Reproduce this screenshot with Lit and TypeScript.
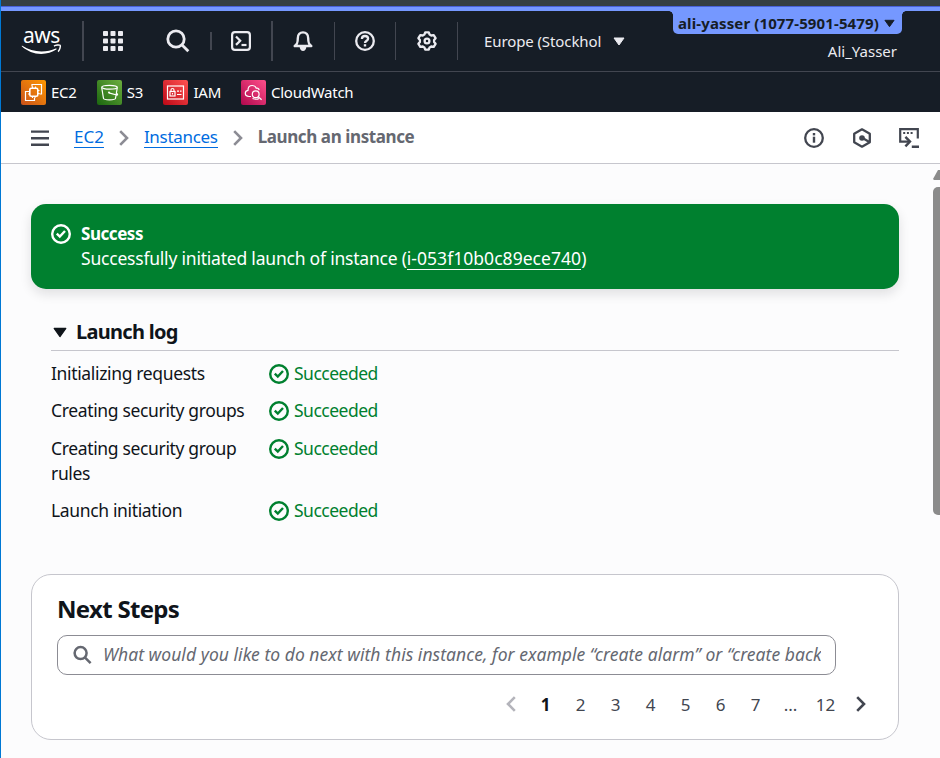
import { LitElement, html, css, svg, nothing } from "lit";
import { customElement, property } from "lit/decorators.js";

const glyphs: Record<string, { box: string; body: unknown }> = {
  apps: {
    box: "0 0 20 20",
    body: svg`<g fill="currentColor" stroke="none">${[0, 7.5, 15].map((y) =>
      [0, 7.5, 15].map((x) => svg`<rect x=${x} y=${y} width="5" height="5" rx="0.8"/>`)
    )}</g>`,
  },
  find: { box: "0 0 24 24", body: svg`<g stroke-width="2.8"><circle cx="10" cy="10" r="8.2"/><path d="M15.8 15.8 22.3 22.3"/></g>` },
  search: { box: "0 0 20 20", body: svg`<g stroke-width="2.5"><circle cx="8.6" cy="8.1" r="6"/><path d="M12.8 12.4 18.6 18.2"/></g>` },
  shell: {
    box: "0 0 20 20",
    body: svg`<g stroke-width="2.2"><rect x="1.1" y="1.1" width="17.8" height="17.8" rx="2.8"/><path d="M5 5.5 9.2 9.7 5 13.9"/><path d="M10.5 14h5"/></g>`,
  },
  bell: {
    box: "0 0 20 20",
    body: svg`<path stroke-width="2.4" stroke-linejoin="round" d="M1.7 15H18.3C15.8 13.4 15.2 12 15.2 7.2 15.2 3.5 13 1.4 10 1.4S4.8 3.5 4.8 7.2C4.8 12 4.2 13.4 1.7 15Z"/><path fill="currentColor" stroke="none" d="M6.7 16h6.6c0 2.4-1.4 3.9-3.3 3.9s-3.3-1.5-3.3-3.9Z"/>`,
  },
  help: {
    box: "0 0 20 20",
    body: svg`<g stroke-width="2.3"><circle cx="10" cy="10" r="8.8"/><path d="M6.9 7.9C6.9 6 8.2 5 10 5s3.1 1 3.1 2.7c0 2-3.1 2.1-3.1 4.4"/></g><rect x="8.8" y="13.2" width="2.4" height="2.3" fill="currentColor" stroke="none"/>`,
  },
  gear: {
    box: "0 0 20 20",
    body: svg`<path stroke-width="2.3" stroke-linejoin="round" d="M8.2 1.3h3.6l.8 2.3 1.6.9 2.5-.4 1.9 3.1-1.5 1.8v2l1.5 1.8-1.9 3.1-2.5-.4-1.6.9-.8 2.3H8.2l-.8-2.3-1.6-.9-2.5.4-1.9-3.1 1.5-1.8V9L1.4 7.2l1.9-3.1 2.5.4 1.6-.9Z"/><circle cx="10" cy="10" r="2.4" stroke-width="2.3"/>`,
  },
  caret: { box: "0 0 12 9", body: svg`<path fill="currentColor" stroke="currentColor" stroke-linejoin="round" d="M1 1h10L6 8Z"/>` },
  menu: { box: "0 0 18 16", body: svg`<path stroke-width="2.4" d="M0 1.6h18M0 8.2h18M0 14.7h18"/>` },
  next: { box: "0 0 10 16", body: svg`<path stroke-width="2.6" d="M1.2 1.2 8 8 1.2 14.8"/>` },
  prev: { box: "0 0 10 16", body: svg`<path stroke-width="2.6" d="M8.8 1.2 2 8 8.8 14.8"/>` },
  ok: { box: "0 0 20 20", body: svg`<circle cx="10" cy="10" r="8.8" stroke-width="2.4"/><path stroke-width="2.4" d="M5.8 9.6 8.8 12.6 14 7"/>` },
  info: {
    box: "0 0 20 20",
    body: svg`<circle cx="10" cy="10" r="8.8" stroke-width="2.3"/><g fill="currentColor" stroke="none"><rect x="8.8" y="5" width="2.4" height="2.4"/><rect x="8.8" y="8.7" width="2.4" height="6"/></g>`,
  },
  hex: {
    box: "0 0 20 20",
    body: svg`<path stroke-width="2.3" stroke-linejoin="round" d="M10 1.3 17.8 5.7V14.3L10 18.7 2.2 14.3V5.7Z"/><circle cx="10" cy="10" r="2.8" fill="currentColor" stroke="none"/><path stroke-width="2.3" d="M10.5 10 17.4 14"/>`,
  },
  panel: {
    box: "0 0 20 20",
    body: svg`<path stroke-width="2.2" d="M18.8 10.5V1.2H1.2V13.7H11"/><path stroke-width="2.4" d="M6.4 8.9 11 13.6 6.4 18.4M12.8 18.8H20"/><path stroke-width="2" stroke-dasharray="2 1.7" d="M4.2 5H14"/>`,
  },
  aws: { box: "0 0 40 12", body: svg`<path fill="currentColor" stroke="none" d="M.3 1.8C6 5.4 12.6 7.4 19.5 7.4c5.2 0 10-1 14.3-2.9.8-.3 1.2.6.5 1.1C30.4 8.4 25 10 19.2 10 11.8 10 5.2 7.2 0 2.6c-.5-.5-.2-1.1.3-.8Z"/><path stroke-width="1.5" d="M32 2.1c1.5-1 5.3-1.5 6.1-.8.7.8-.3 4.6-2 6.3"/>` },
  ec2: {
    box: "0 0 25 25",
    body: svg`<g stroke-width="1.2"><rect x="8.8" y="8.2" width="8" height="8" rx="1.5" stroke-width="1.6"/><path d="M11 6.5V4.5H20.5V14H18.5M7 11.5H4.5V20.5H13.5V18M11.5 8V6.5M14.5 8V6.5M17 10.5h1.5M17 13.5h1.5M8.8 11.5H7M8.8 14H7M11.5 16v2M14 16v2"/></g>`,
  },
  s3: {
    box: "0 0 25 25",
    body: svg`<g stroke-width="1.2"><ellipse cx="12.5" cy="7.2" rx="7.8" ry="1.9"/><path d="M4.7 7.5 6.5 18.5c.3 1.7 11.7 1.7 12 0L20.3 7.5M12 12.8l7.5 2.2c1.6.3 1.3-1-.2-2"/></g><circle cx="12" cy="12.6" r="1" fill="currentColor" stroke="none"/>`,
  },
  iam: {
    box: "0 0 25 25",
    body: svg`<g stroke-width="1.2"><rect x="4.5" y="6" width="16" height="13"/><rect x="7" y="11.5" width="5" height="4.5"/><path d="M8 11.5V10q0-1.5 1.5-1.5T11 10v1.5M14 11.2h2M17 11.2h1.5M14 14.5h4.5M9.5 13v1.5"/></g>`,
  },
  watch: {
    box: "0 0 25 25",
    body: svg`<g stroke-width="1.2"><path d="M10 16.5H8C5.5 16.5 4.3 15 4.3 13.3c0-1.8 1.1-2.8 2.7-3C7 7.3 9 5.5 11.3 5.5c2 0 3.3 1 4 2.8 1.6-.5 2.6.4 2.8 1.9"/><circle cx="14.7" cy="14.3" r="3.4"/><path d="m17.3 16.8 3.3 3"/><path d="M11.5 18.5q4 1.5 6.5 0"/></g>`,
  },
};

@customElement("ui-icon")
class UiIcon extends LitElement {
  @property() name = "";
  static styles = css`
    :host { display: block; flex: none; }
    svg { display: block; width: 100%; height: 100%; fill: none; stroke: currentColor; overflow: visible; }
  `;
  render() {
    const g = glyphs[this.name];
    return g ? html`<svg viewBox=${g.box} aria-hidden="true">${g.body}</svg>` : nothing;
  }
}

const favorites = [
  { icon: "ec2", label: "EC2" },
  { icon: "s3", label: "S3" },
  { icon: "iam", label: "IAM" },
  { icon: "watch", label: "CloudWatch" },
];
const log = ["Initializing requests", "Creating security groups", "Creating security group rules", "Launch initiation"];
const pages = ["1", "2", "3", "4", "5", "6", "7", "...", "12"];

@customElement("app-root")
class AppRoot extends LitElement {
  static styles = css`
    :host {
      display: block; box-sizing: border-box; width: 940px; height: 758px; overflow: hidden;
      border-left: 1px solid #0078d4; background: #fcfcfd; color: #0f141a;
      font-family: "Noto Sans", "Open Sans", sans-serif; font-size: 17px; line-height: 25px;
    }
    * { box-sizing: border-box; }
    .chrome { height: 11px; background: #7598ff; border-top: 6px solid #353f41; }
    .chrome::before { content: ""; display: block; height: 1px; background: #4862d8; }
    .top { height: 61px; display: flex; background: #161d26; border-bottom: 1px solid #424650; color: #ebebf0; }
    .cell { display: flex; align-items: center; justify-content: center; height: 60px; }
    .rule { flex: none; width: 1px; height: 38px; margin-top: 11px; background: #424650; }
    .rule.thick { width: 2px; height: 40px; margin-top: 10px; }
    .rule.short { width: 2px; height: 18px; margin-top: 21px; }
    .logo { width: 81px; flex-direction: column; align-items: flex-start; padding: 0 0 2px 21px; color: #fff; }
    .logo span { height: 20px; font-size: 21px; line-height: 20px; letter-spacing: -0.5px; padding-left: 1px; }
    .logo ui-icon { width: 40px; height: 12px; margin-top: -1px; }
    .i20 { width: 20px; height: 20px; }
    .i24 { width: 24px; height: 24px; }
    .w-apps { width: 59px; padding-right: 1px; }
    .w-find { width: 67px; padding-left: 2px; }
    .w-shell { width: 59px; padding-right: 2px; }
    .w-bell { width: 61px; padding-right: 2px; }
    .w-help { width: 60px; }
    .w-gear { width: 61px; }
    .region { padding-left: 26px; font-size: 15px; letter-spacing: -0.1px; gap: 12px; }
    .caret { width: 12px; height: 9px; }
    .user { margin-left: auto; margin-right: 38px; display: flex; flex-direction: column; align-items: flex-end; }
    .account {
      position: relative; display: flex; align-items: center; justify-content: space-between; width: 229px; height: 23px;
      padding: 1px 7px 0 5px; background: #7598ff; color: #161d26; border-radius: 0 0 5px 5px;
      font-size: 15px; font-weight: 700; white-space: nowrap; letter-spacing: 0.12px;
    }
    .account::before, .account::after { content: ""; position: absolute; top: 0; width: 4px; height: 4px; }
    .account::before { left: -4px; background: radial-gradient(circle at 0 100%, #161d26 3.5px, #7598ff 4px); }
    .account::after { right: -4px; background: radial-gradient(circle at 100% 100%, #161d26 3.5px, #7598ff 4px); }
    .account .caret { width: 11px; }
    .who { font-size: 15px; line-height: 20px; margin: 7px 5px 0 0; }
    .favs { height: 40px; display: flex; align-items: center; gap: 20px; padding-left: 20px; background: #161d26; color: #fff; font-size: 15px; letter-spacing: -0.25px; }
    .fav { display: flex; align-items: center; gap: 5px; }
    .fav:nth-child(3) { margin-left: 0.5px; }
    .tile { width: 25px; height: 25px; border-radius: 2px; }
    .tile.ec2 { background: linear-gradient(45deg, #c8511b, #ff9900); }
    .tile.s3 { background: linear-gradient(45deg, #1b660f, #6cae3e); }
    .tile.iam { background: linear-gradient(45deg, #bd0816, #ff5252); }
    .tile.watch { background: linear-gradient(45deg, #b0084d, #ff4f8b); }
    .crumbs { height: 52px; display: flex; align-items: center; background: #fff; border-bottom: 1px solid #c6c6cd; padding: 0 21px 0 30px; color: #424650; }
    .crumbs .menu { width: 18px; height: 16px; margin: 1px 25px 0 0; }
    .crumbs a { color: #006ce0; height: 23px; line-height: 23px; border-bottom: 1px solid #006ce0; margin-top: -2px; }
    .crumbs a.long { letter-spacing: -0.31px; }
    .crumbs .sep { width: 10px; height: 16px; margin: 1px 15px 0; color: #8c8c94; }
    .crumbs b { color: #656871; margin-top: -3px; letter-spacing: -0.4px; }
    .tools { margin-left: auto; display: flex; gap: 28px; color: #424650; }
    .tools ui-icon:last-child { margin-left: -1px; }
    .body { display: flex; height: 594px; }
    main { width: 868px; margin: 40px 0 0 30px; }
    .alert { display: flex; gap: 10px; height: 85px; padding: 17px 20px; border-radius: 15px; background: #00802f; color: #fff; box-shadow: 0 5px 12px rgba(15, 20, 26, 0.12); }
    .alert ui-icon { margin-top: 3px; }
    .t-success { letter-spacing: -0.45px; }
    .t-alert { font-size: 17.5px; letter-spacing: -0.21px; }
    .alert .link { display: inline-block; height: 24px; border-bottom: 1px solid #fff; letter-spacing: 0.04px; }
    .log { padding: 30px 0 0 20px; }
    .log h2 { display: flex; align-items: center; height: 32px; margin: 0; padding: 0 0 6px 2px; gap: 9px; border-bottom: 1px solid #c6c6cd; font-size: 20px; line-height: 26px; letter-spacing: -0.7px; }
    .log h2 .caret { width: 14px; height: 11px; margin-top: 2px; }
    .rows { display: grid; grid-template-columns: 195px auto; column-gap: 23px; row-gap: 12.5px; padding-top: 9.5px; font-size: 17.5px; letter-spacing: -0.35px; }
    .state { display: flex; gap: 5px; color: #00802f; letter-spacing: -0.5px; }
    .state ui-icon { margin-top: 3.4px; }
    .card { margin-top: 51px; height: 166px; padding: 19px 26px 0 25px; background: #fff; border: 1px solid #c6c6cd; border-radius: 20px; }
    .card h1 { margin: 0; font-size: 24px; line-height: 30px; letter-spacing: -0.7px; }
    .field { display: flex; align-items: center; width: 779px; height: 40px; margin-top: 11px; padding: 0 14px; gap: 11px; border: 1px solid #8c8c94; border-radius: 10px; color: #656871; }
    .hint { overflow: hidden; white-space: nowrap; font-style: italic; font-size: 17.5px; letter-spacing: 0.04px; margin-top: -1px; }
    .pager { display: flex; align-items: center; justify-content: flex-end; height: 30px; margin: 14px 6px 0 0; color: #424650; }
    .pager span { width: 35px; text-align: center; }
    .pager .on { font-weight: 700; color: #0f141a; }
    .pager .arrow { width: 10px; height: 16px; }
    .pager .off { color: #b4b4bb; margin-right: 12px; }
    .pager .go { margin-left: 13px; }
    .bar { width: 7px; margin-left: auto; padding-top: 6px; overflow: hidden; color: #8b8b8b; }
    .bar .up { width: 14px; height: 10px; background: currentColor; clip-path: polygon(0 90%, 5px 0, 9px 0, 14px 90%, 13px 100%, 1px 100%); }
    .bar .thumb { width: 14px; height: 328px; margin-top: 7px; border-radius: 5px; background: currentColor; }
  `;

  render() {
    return html`
      <div class="chrome"></div>
      <header class="top">
        <div class="cell logo"><span>aws</span><ui-icon name="aws"></ui-icon></div>
        <i class="rule thick"></i>
        <div class="cell w-apps"><ui-icon class="i20" name="apps"></ui-icon></div>
        <div class="cell w-find"><ui-icon class="i24" name="find"></ui-icon></div>
        <i class="rule short"></i>
        <div class="cell w-shell"><ui-icon class="i20" name="shell"></ui-icon></div>
        <i class="rule thick"></i>
        <div class="cell w-bell"><ui-icon class="i20" name="bell"></ui-icon></div>
        <i class="rule"></i>
        <div class="cell w-help"><ui-icon class="i20" name="help"></ui-icon></div>
        <i class="rule"></i>
        <div class="cell w-gear"><ui-icon class="i20" name="gear"></ui-icon></div>
        <i class="rule"></i>
        <div class="cell region"><span>Europe (Stockhol</span><ui-icon class="caret" name="caret"></ui-icon></div>
        <div class="user">
          <div class="account"><span>ali-yasser (1077-5901-5479)</span><ui-icon class="caret" name="caret"></ui-icon></div>
          <div class="who">Ali_Yasser</div>
        </div>
      </header>
      <nav class="favs">
        ${favorites.map((f) => html`<div class="fav"><ui-icon class="tile ${f.icon}" name=${f.icon}></ui-icon><span>${f.label}</span></div>`)}
      </nav>
      <nav class="crumbs">
        <ui-icon class="menu" name="menu"></ui-icon>
        <a>EC2</a><ui-icon class="sep" name="next"></ui-icon>
        <a class="long">Instances</a><ui-icon class="sep" name="next"></ui-icon>
        <b>Launch an instance</b>
        <div class="tools">
          <ui-icon class="i20" name="info"></ui-icon>
          <ui-icon class="i20" name="hex"></ui-icon>
          <ui-icon class="i20" name="panel"></ui-icon>
        </div>
      </nav>
      <div class="body">
        <main>
          <section class="alert">
            <ui-icon class="i20" name="ok"></ui-icon>
            <div>
              <b class="t-success">Success</b>
              <div class="t-alert">Successfully initiated launch of instance (<span class="link">i-053f10b0c89ece740</span>)</div>
            </div>
          </section>
          <section class="log">
            <h2><ui-icon class="caret" name="caret"></ui-icon><span>Launch log</span></h2>
            <div class="rows">
              ${log.map((l) => html`<div>${l}</div><div class="state"><ui-icon class="i20" name="ok"></ui-icon><span>Succeeded</span></div>`)}
            </div>
          </section>
          <section class="card">
            <h1>Next Steps</h1>
            <div class="field">
              <ui-icon class="i20" name="search"></ui-icon>
              <span class="hint">What would you like to do next with this instance, for example “create alarm” or “create backup”</span>
            </div>
            <div class="pager">
              <ui-icon class="arrow off" name="prev"></ui-icon>
              ${pages.map((p, i) => html`<span class=${i === 0 ? "on" : ""}>${p}</span>`)}
              <ui-icon class="arrow go" name="next"></ui-icon>
            </div>
          </section>
        </main>
        <div class="bar"><div class="up"></div><div class="thumb"></div></div>
      </div>
    `;
  }
}
